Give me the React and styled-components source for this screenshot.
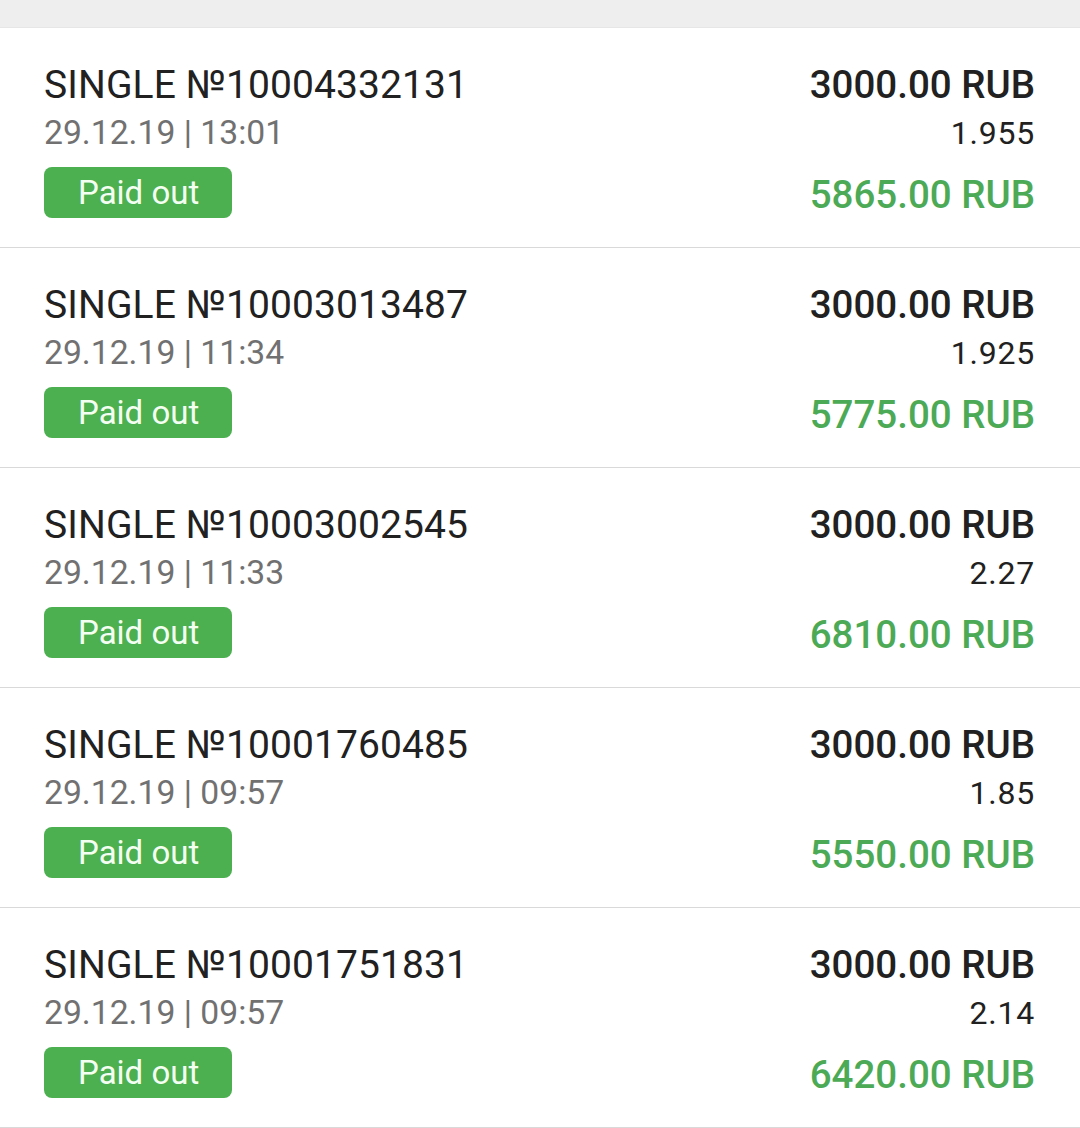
import React from "react";
import styled, { createGlobalStyle } from "styled-components";

const Global = createGlobalStyle`
  html, body { margin: 0; padding: 0; background: #ffffff; }
  body { font-family: Roboto, "Noto Sans", "Liberation Sans", sans-serif; -webkit-font-smoothing: antialiased; }
`;

const Page = styled.div`
  width: 1080px;
  background: #ffffff;
`;

const TopBand = styled.div`
  height: 27px;
  background: #eeeeee;
  border-bottom: 1px solid #e6e6e6;
`;

const List = styled.div`
  display: flex;
  flex-direction: column;
`;

const Row = styled.div`
  display: flex;
  justify-content: space-between;
  align-items: flex-start;
  height: 220px;
  box-sizing: border-box;
  padding: 33px 45px 0 44px;
  border-bottom: 1px solid #d9d9d9;
`;

const Left = styled.div`
  display: flex;
  flex-direction: column;
  align-items: flex-start;
`;

const Right = styled.div`
  display: flex;
  flex-direction: column;
  align-items: flex-end;
`;

const Title = styled.div`
  font-size: 39px;
  line-height: 48px;
  color: #212121;
  letter-spacing: 0.1px;
`;

const DateLine = styled.div`
  font-size: 33.7px;
  line-height: 48px;
  color: #717171;
`;

const Badge = styled.div`
  margin-top: 10px;
  height: 51px;
  box-sizing: border-box;
  padding: 0 33px 0 34px;
  border-radius: 8px;
  background: #4caf50;
  color: #f4fff2;
  font-size: 33px;
  line-height: 51px;
`;

const Stake = styled.div`
  font-size: 38.5px;
  line-height: 48px;
  font-weight: 500;
  color: #212121;
`;

const Rate = styled.div`
  font-size: 32px;
  line-height: 48px;
  color: #212121;
  letter-spacing: 0.8px;
`;

const Win = styled.div`
  margin-top: 14px;
  font-size: 38.5px;
  line-height: 48px;
  font-weight: 500;
  color: #4caa56;
`;

const bets = [
  { id: "10004332131", time: "13:01", rate: "1.955", win: "5865.00" },
  { id: "10003013487", time: "11:34", rate: "1.925", win: "5775.00" },
  { id: "10003002545", time: "11:33", rate: "2.27", win: "6810.00" },
  { id: "10001760485", time: "09:57", rate: "1.85", win: "5550.00" },
  { id: "10001751831", time: "09:57", rate: "2.14", win: "6420.00" },
];

export default function App() {
  return (
    <Page>
      <Global />
      <TopBand />
      <List>
        {bets.map((b) => (
          <Row key={b.id}>
            <Left>
              <Title>SINGLE №{b.id}</Title>
              <DateLine>29.12.19 | {b.time}</DateLine>
              <Badge>Paid out</Badge>
            </Left>
            <Right>
              <Stake>3000.00 RUB</Stake>
              <Rate>{b.rate}</Rate>
              <Win>{b.win} RUB</Win>
            </Right>
          </Row>
        ))}
      </List>
    </Page>
  );
}
